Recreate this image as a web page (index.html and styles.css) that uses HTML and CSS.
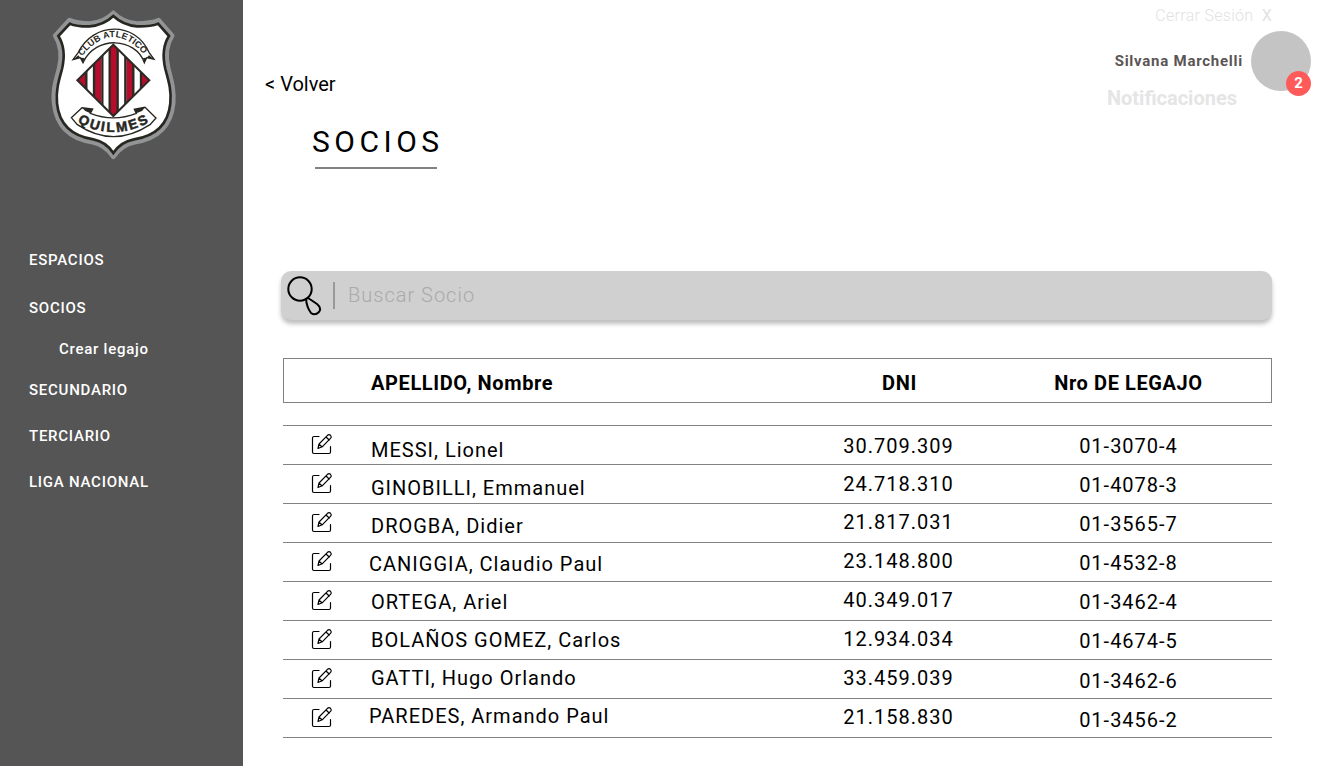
FILE: index.html
```html
<!DOCTYPE html>
<html lang="es">
<head>
<meta charset="utf-8">
<title>Socios</title>
<link rel="stylesheet" href="styles.css">
</head>
<body>
<svg class="sprite" width="0" height="0">
  <symbol id="edit" viewBox="0 0 22 22">
    <path d="M8 3.5H3Q1.5 3.5 1.5 5V19Q1.5 20.500 3 20.500H18Q19.500 20.500 19.500 19V13.500M7 15.500L8 11L16.500 2.300Q18 .9 19.500 2.300Q21 3.800 19.700 5.200L11.200 13.800ZM15 4L18.200 7M8 11.200L11 13.800" fill="none" stroke="#000" stroke-width="1.2" stroke-linecap="round" stroke-linejoin="round"/>
  </symbol>
</svg>
<div class="app">
  <aside class="sidebar">
    <svg class="crest" viewBox="0 0 450 510">
      <defs>
        <path id="arc-top" d="M126 169Q220 52 318 171"/>
        <path id="arc-bottom" d="M112 366Q220 428 334 363"/>
        <clipPath id="diamond"><path d="M220 134L328 241L220 348L112 241Z"/></clipPath>
      </defs>
      <path class="shield" d="M220 38Q191 67 149 70Q110 70 88 60L45 107Q71 147 57 205C47 243 37 270 42 310C50 388 98 418 158 427Q196 435 220 471Q244 435 284 427C344 418 392 388 400 310C403 270 395 243 385 205Q371 147 397 107L356 60Q332 70 291 70Q249 67 220 38Z"/>
      <path class="shield-line" d="M220 48Q192 75 149 79Q112 80 90 71L55 108Q80 147 66 207C56 243 47 272 51 310C58 379 102 409 160 418Q199 426 220 459Q241 426 282 418C340 409 384 379 391 310C395 272 386 243 376 207Q362 147 387 108L354 71Q330 80 291 79Q248 75 220 48Z"/>
      <path class="ribbon" d="M99 179L115 157C160 66 285 62 327 157L342 178L320 173L313 188C287 112 167 105 129 188L121 173Z"/>
      <path class="ribbon-fold" d="M99 179L115 166L121 173ZM121 173L133 174L129 188ZM342 178L327 166L320 173ZM320 173L309 174L313 188Z"/>
      <path class="ribbon" d="M94 353L126 323L158 327L151 340Q220 367 289 340L283 328L315 322L348 354L330 374Q220 446 112 374Z"/>
      <path class="ribbon-fold" d="M126 323L158 327L151 340L136 333ZM315 322L283 328L289 340L306 333Z"/>
      <g clip-path="url(#diamond)">
        <path fill="#b50d2b" d="M112 134h26v214h-26zM163 134h20v214h-20zM209 134h24v214h-24zM259 134h20v214h-20zM304 134h25v214h-25z"/>
        <path class="bars" d="M139 134V348M162 134V348M187 134V348M209 134V348M233 134V348M256 134V348M280 134V348M303 134V348"/>
      </g>
      <path class="diamond" d="M220 134L328 241L220 348L112 241Z"/>
      <text class="crest-top"><textPath href="#arc-top" textLength="222">CLUB ATLETICO</textPath></text>
      <text class="crest-bottom"><textPath href="#arc-bottom" textLength="225">QUILMES</textPath></text>
    </svg>
    <nav class="menu">
      <a>ESPACIOS</a>
      <a>SOCIOS</a>
      <a class="sub">Crear legajo</a>
      <a>SECUNDARIO</a>
      <a>TERCIARIO</a>
      <a>LIGA NACIONAL</a>
    </nav>
  </aside>
  <main class="main">
    <header class="top">
      <div class="heading">
        <a class="back">&lt; Volver</a>
        <h1 class="title">SOCIOS</h1>
      </div>
      <div class="account">
        <a class="logout">Cerrar Sesión <b>X</b></a>
        <div class="user"><span class="user-name">Silvana Marchelli</span><span class="avatar"><span class="badge">2</span></span></div>
        <a class="notifications">Notificaciones</a>
      </div>
    </header>
    <div class="search">
      <svg class="lens" viewBox="0 0 36 42"><circle cx="14" cy="14" r="11.700"/><path d="M20 23.500Q20.500 32 25 38Q29 41 33 37Q36 33 31 29Q26 25.500 22 23"/></svg>
      <span class="caret"></span>
      <span class="placeholder">Buscar Socio</span>
    </div>
    <div class="row head"><span></span><span>APELLIDO, Nombre</span><span>DNI</span><span>Nro DE LEGAJO</span></div>
    <div class="rows">
      <div class="row"><svg class="edit"><use href="#edit"/></svg><span class="name">MESSI, Lionel</span><span class="dni">30.709.309</span><span class="file">01-3070-4</span></div>
      <div class="row"><svg class="edit"><use href="#edit"/></svg><span class="name">GINOBILLI, Emmanuel</span><span class="dni">24.718.310</span><span class="file">01-4078-3</span></div>
      <div class="row"><svg class="edit"><use href="#edit"/></svg><span class="name">DROGBA, Didier</span><span class="dni">21.817.031</span><span class="file">01-3565-7</span></div>
      <div class="row"><svg class="edit"><use href="#edit"/></svg><span class="name">CANIGGIA, Claudio Paul</span><span class="dni">23.148.800</span><span class="file">01-4532-8</span></div>
      <div class="row"><svg class="edit"><use href="#edit"/></svg><span class="name">ORTEGA, Ariel</span><span class="dni">40.349.017</span><span class="file">01-3462-4</span></div>
      <div class="row"><svg class="edit"><use href="#edit"/></svg><span class="name">BOLAÑOS GOMEZ, Carlos</span><span class="dni">12.934.034</span><span class="file">01-4674-5</span></div>
      <div class="row"><svg class="edit"><use href="#edit"/></svg><span class="name">GATTI, Hugo Orlando</span><span class="dni">33.459.039</span><span class="file">01-3462-6</span></div>
      <div class="row"><svg class="edit"><use href="#edit"/></svg><span class="name">PAREDES, Armando Paul</span><span class="dni">21.158.830</span><span class="file">01-3456-2</span></div>
    </div>
  </main>
</div>
</body>
</html>
```
FILE: styles.css
```css
* { box-sizing: border-box; }
body { margin: 0; background: #fff; color: #000; font-family: Roboto, "Liberation Sans", sans-serif; }
.sprite { display: block; }
.app { display: flex; height: 766px; overflow: hidden; }

.sidebar { width: 243px; flex: none; background: #555; border-bottom: 1px solid #5c5558; }
.crest { display: block; width: 150px; height: 170px; margin-left: 40px; }
.shield { fill: #fff; stroke: #929496; stroke-width: 13; stroke-linejoin: round; }
.shield-line { fill: #fff; stroke: #272722; stroke-width: 8; }
.ribbon { fill: #fff; stroke: #272722; stroke-width: 4; }
.ribbon-fold { fill: #272722; }
.bars { stroke: #2b2a25; stroke-width: 7; }
.diamond { fill: none; stroke: #2b2a25; stroke-width: 6; }
.crest-top, .crest-bottom { font-family: "Liberation Sans", sans-serif; font-weight: 700; fill: #272722; }
.crest-top { font-size: 27px; }
.crest-bottom { font-size: 41px; stroke: #272722; stroke-width: 1.5; }
.menu { display: flex; flex-direction: column; padding: 80px 0 0 29px; color: #fff; font-size: 15px; font-weight: 500; letter-spacing: .75px; line-height: 20px; }
.menu a { margin-bottom: 26px; }
.menu a:nth-child(1) { margin-bottom: 28px; }
.menu a:nth-child(2), .menu .sub { margin-bottom: 21px; }
.menu .sub { margin-left: 30px; }

.main { flex: 1; padding-right: 56px; }
.top { display: flex; justify-content: space-between; height: 271px; margin-right: -39px; }
.heading { padding: 72px 0 0 22px; }
.back { display: block; font-size: 20px; line-height: 24px; }
.title { width: 122px; margin: 28px 0 0 50px; padding-bottom: 7px; border-bottom: 2px solid #828282; font-size: 30px; font-weight: 400; letter-spacing: 4.5px; line-height: 36px; white-space: nowrap; text-indent: -3px; }
.account { display: flex; flex-direction: column; align-items: flex-end; }
.logout { height: 31px; margin-right: 39px; padding-top: 6px; color: #e2e2e2; font-size: 16px; font-weight: 300; letter-spacing: .3px; line-height: 20px; }
.logout b { margin-left: 4px; }
.user { display: flex; align-items: center; gap: 8px; }
.user-name { color: #5b5555; font-size: 15px; font-weight: 700; letter-spacing: .75px; }
.avatar { position: relative; width: 60px; height: 60px; border-radius: 50%; background: #c4c4c4; }
.badge { position: absolute; right: 0; bottom: -5px; width: 25px; height: 25px; border-radius: 50%; background: #ff5a5a; color: #fff; font-size: 15px; font-weight: 700; line-height: 25px; text-align: center; }
.notifications { margin-right: 74px; padding-top: -4px; color: #e5e5e5; font-size: 20px; font-weight: 700; line-height: 14px; }

.search { display: flex; align-items: center; height: 49px; margin-left: 38px; border-radius: 10px; background: #d0d0d0; box-shadow: 0 4px 4px rgba(0,0,0,.25); }
.lens { width: 36px; height: 42px; margin-left: 5px; fill: none; stroke: #000; stroke-width: 2; }
.caret { width: 2px; height: 27px; margin-left: 11px; background: #999; }
.placeholder { margin-left: 13px; padding-bottom: 2px; color: #aaa; font-size: 20px; font-weight: 300; letter-spacing: 1px; }

.row { display: grid; grid-template-columns: 88px 441px 173px 1fr; height: 39px; border-bottom: 1px solid #828282; font-size: 20px; letter-spacing: 1px; line-height: 24px; }
.head { height: 45px; margin: 38px 0 22px 40px; padding-top: 12px; border: 1px solid #828282; font-weight: 700; letter-spacing: .6px; }
.head span:nth-child(2) { margin-left: -1px; }
.head span:nth-child(3), .head span:nth-child(4) { text-align: center; }
.rows { margin-left: 40px; border-top: 1px solid #828282; }
.edit { width: 22px; height: 22px; margin: 7px 0 0 28px; }
.name { padding-top: 12px; }
.dni, .file { padding-top: 8px; text-align: center; }
.row:nth-child(2) .name { padding-top: 11px; }
.row:nth-child(3) .name { padding-top: 10px; }
.row:nth-child(4) .name { padding-top: 9px; margin-left: -2px; }
.row:nth-child(5) .name { padding-top: 8px; }
.row:nth-child(6) .name { padding-top: 7px; }
.row:nth-child(7) .name { padding-top: 6px; }
.row:nth-child(8) .name { padding-top: 5px; margin-left: -2px; }
.row:nth-child(n+2) .dni { padding-top: 7px; }
.row:nth-child(n+3) .dni { padding-top: 6px; }
.row:nth-child(n+7) .file { padding-top: 9px; }
```
